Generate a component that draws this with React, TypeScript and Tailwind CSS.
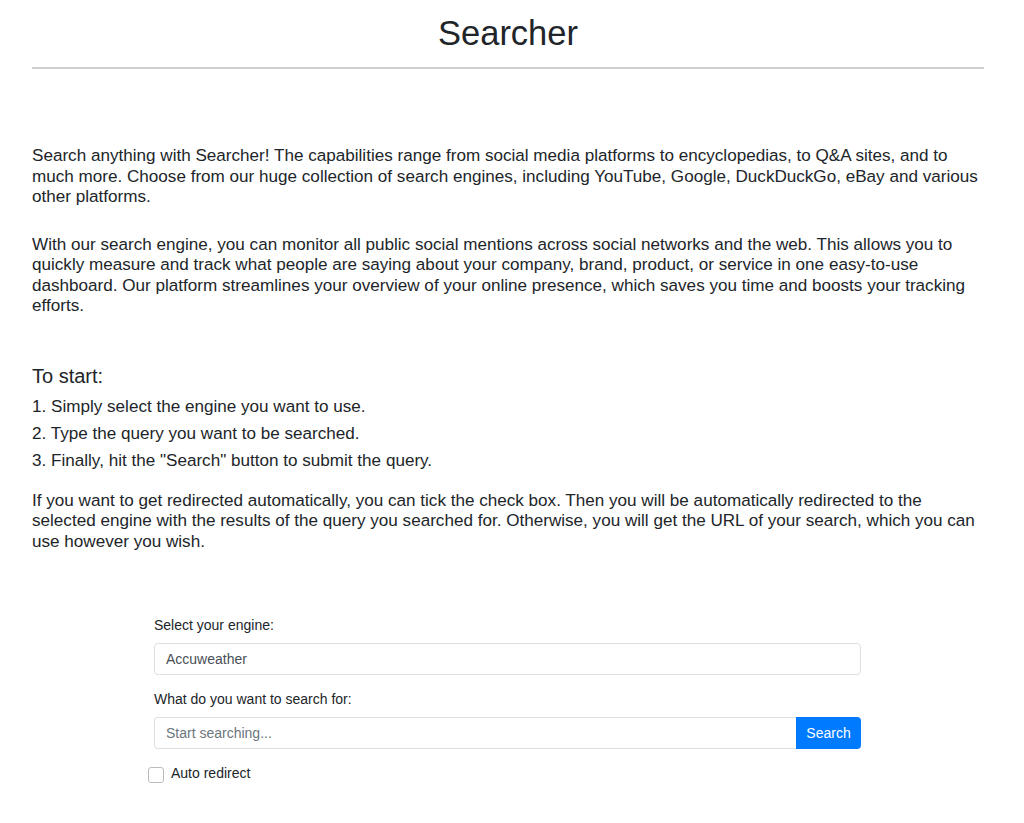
import { useState } from 'react';

const steps = [
  '1. Simply select the engine you want to use.',
  '2. Type the query you want to be searched.',
  '3. Finally, hit the "Search" button to submit the query.',
];

export default function App() {
  const [query, setQuery] = useState('');
  const [autoRedirect, setAutoRedirect] = useState(false);

  return (
    <div className="min-h-screen bg-white pl-8 pr-10 text-[#212529] font-['Liberation_Sans',Arial,sans-serif]">
      {/* Header */}
      <h1 className="pt-[14px] text-center text-[34.5px] leading-[39px] font-normal">Searcher</h1>
      <hr className="mt-[14px] border-t-2 border-[#cfcfcf]" />

      {/* Intro */}
      <div className="mt-[77px] text-[17.1px] leading-[20.5px]">
        <p>
          Search anything with Searcher! The capabilities range from social media platforms to
          encyclopedias, to Q&amp;A sites, and to much more. Choose from our huge collection of search
          engines, including YouTube, Google, DuckDuckGo, eBay and various other platforms.
        </p>
        <p className="mt-[27px]">
          With our search engine, you can monitor all public social mentions across social networks and
          the web. This allows you to quickly measure and track what people are saying about your
          company, brand, product, or service in one easy-to-use dashboard. Our platform streamlines
          your overview of your online presence, which saves you time and boosts your tracking efforts.
        </p>
      </div>

      <h2 className="mt-[47px] text-[20px] leading-[24px] font-normal">To start:</h2>
      <ul className="mt-[5px] text-[17.1px] leading-[27px]">
        {steps.map((step) => (
          <li key={step}>{step}</li>
        ))}
      </ul>

      <p className="mt-[17px] text-[17.1px] leading-[20.5px]">
        If you want to get redirected automatically, you can tick the check box. Then you will be
        automatically redirected to the selected engine with the results of the query you searched for.
        Otherwise, you will get the URL of your search, which you can use however you wish.
      </p>

      {/* Search form */}
      <form className="mt-[65px] ml-[122px] w-[707px] text-[14px]" onSubmit={(e) => e.preventDefault()}>
        <label className="block leading-[16px]">Select your engine:</label>
        <div className="mt-[10px] flex h-[32px] items-center rounded border border-[#dcdfe3] px-[11px] text-[#495057]">
          Accuweather
        </div>

        <label className="mt-[16px] block leading-[16px]">What do you want to search for:</label>
        <div className="mt-[10px] flex h-[32px]">
          <input
            type="text"
            value={query}
            onChange={(e) => setQuery(e.target.value)}
            placeholder="Start searching..."
            className="min-w-0 flex-1 rounded-l border border-r-0 border-[#dcdfe3] px-[11px] text-[#495057] outline-none placeholder:text-[#6c757d]"
          />
          <button type="submit" className="w-[65px] rounded-r bg-[#007bff] text-white">
            Search
          </button>
        </div>

        <label className="-ml-[6px] mt-[14px] flex items-center gap-[7px] leading-[16px]">
          <input
            type="checkbox"
            checked={autoRedirect}
            onChange={(e) => setAutoRedirect(e.target.checked)}
            className="mt-[4px] h-[16px] w-[16px] appearance-none rounded-[3px] border border-[#b8bcc0] bg-white"
          />
          <span>Auto redirect</span>
        </label>
      </form>
    </div>
  );
}
